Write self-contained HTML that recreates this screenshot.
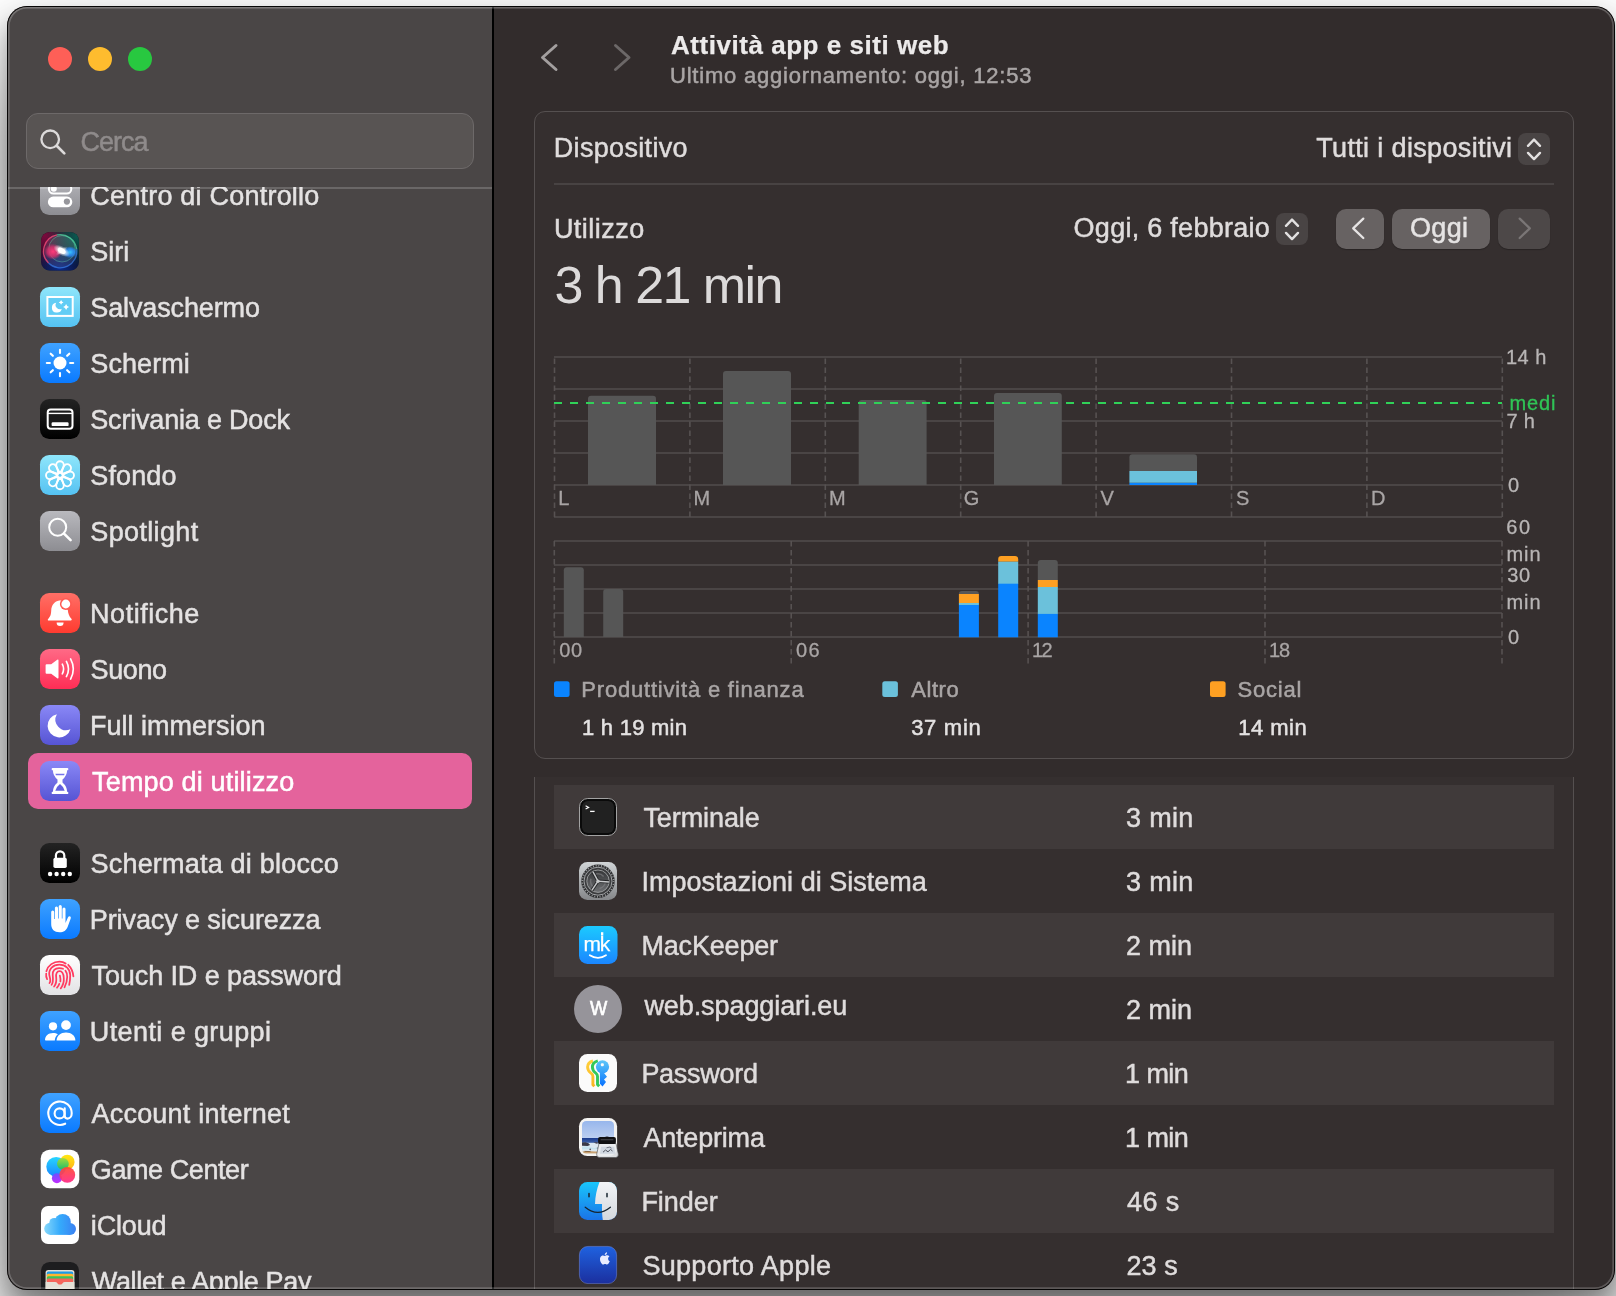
<!DOCTYPE html>
<html lang="it"><head><meta charset="utf-8"><title>Tempo di utilizzo</title>
<style>
*{margin:0;padding:0;box-sizing:border-box}
html,body{width:1616px;height:1296px;overflow:hidden}
body{position:relative;font-family:"Liberation Sans",sans-serif;background:#fff}
#win{position:absolute;left:7px;top:6px;width:1608px;height:1284px;border-radius:20px;overflow:hidden;background:#322c2c;box-shadow:0 14px 24px rgba(0,0,0,.32),0 60px 110px rgba(0,0,0,.45)}
#win>*{position:absolute}
#page{left:-7px;top:-6px;width:1616px;height:1296px;will-change:transform}
#page>*{position:absolute}
#frame{left:0;top:0;width:1608px;height:1284px;border-radius:20px;border:1px solid #070606;pointer-events:none}
#frame:after{content:"";position:absolute;left:0;top:0;right:0;bottom:0;border-radius:19px;box-shadow:inset 0 0 0 1.7px rgba(255,255,255,.2),inset 0 1px 0 0 rgba(255,255,255,.1)}
#sb{left:7px;top:6px;width:485px;height:1284px;background:#4a4646}
#sbclip{left:7px;top:187px;width:485px;height:1102px;overflow:hidden}
#sbclip>div{position:absolute;left:-7px;top:-187px;width:1616px;height:1296px}
#sbclip>div>*{position:absolute}
#sbline{left:7px;top:187px;width:485px;height:2px;background:rgba(255,255,255,.18)}
#div{left:492px;top:6px;width:2px;height:1284px;background:#000}
#search{left:26px;top:113px;width:448px;height:56px;border-radius:12px;background:#585453;border:1px solid #6d6969}
#sel{left:28px;top:753px;width:444px;height:56px;border-radius:10px;background:#e4639c}
.tl{width:24px;height:24px;border-radius:50%;top:47px}
.t{position:absolute;white-space:nowrap}
#p1{left:534px;top:111px;width:1040px;height:648px;border-radius:11px;background:#352f2f;border:1px solid #555050}
#p2{left:534px;top:777px;width:1040px;height:520px;background:#352f2f;border-left:1px solid #555050;border-right:1px solid #555050}
.row{position:absolute;left:554px;width:1000px;height:64px;background:#403a3a}
#sep{left:554px;top:183.3px;width:1000px;height:1.4px;background:#484343}
.step{width:32px;height:32px;border-radius:8px;background:#494444}
.btn{top:209px;height:40px;border-radius:10px;background:#676262;box-shadow:0 1px 1px rgba(0,0,0,.25)}
svg{position:absolute;overflow:visible}
.gl{stroke:#4a4545;stroke-width:2}
.gd{stroke:#575252;stroke-width:1.6;stroke-dasharray:5.6 3.4}
</style></head><body>
<div id="win"><div id="page">
<div id="sb"></div>
<div id="sbclip"><div>
<div id="sel"></div>
<svg width="0" height="0" style="left:0;top:0"><defs><linearGradient id="gGray" x1="0" y1="0" x2="0" y2="1"><stop offset="0" stop-color="#b9b9be"/><stop offset="1" stop-color="#8d8d92"/></linearGradient><linearGradient id="gCyan" x1="0" y1="0" x2="0" y2="1"><stop offset="0" stop-color="#8fe6fb"/><stop offset="1" stop-color="#55c2f2"/></linearGradient><linearGradient id="gBlue" x1="0" y1="0" x2="0" y2="1"><stop offset="0" stop-color="#3fa2ff"/><stop offset="1" stop-color="#0a7aff"/></linearGradient><linearGradient id="gBlk" x1="0" y1="0" x2="0" y2="1"><stop offset="0" stop-color="#232323"/><stop offset="1" stop-color="#000000"/></linearGradient><linearGradient id="gRed" x1="0" y1="0" x2="0" y2="1"><stop offset="0" stop-color="#ff6f66"/><stop offset="1" stop-color="#ff3b30"/></linearGradient><linearGradient id="gPink" x1="0" y1="0" x2="0" y2="1"><stop offset="0" stop-color="#ff6a86"/><stop offset="1" stop-color="#ff2d55"/></linearGradient><linearGradient id="gPurp" x1="0" y1="0" x2="0" y2="1"><stop offset="0" stop-color="#8a88f6"/><stop offset="1" stop-color="#5654d4"/></linearGradient><linearGradient id="gWht" x1="0" y1="0" x2="0" y2="1"><stop offset="0" stop-color="#ffffff"/><stop offset="1" stop-color="#e2e2e4"/></linearGradient><linearGradient id="gSys" x1="0" y1="0" x2="0" y2="1"><stop offset="0" stop-color="#d0d4d6"/><stop offset="1" stop-color="#85878a"/></linearGradient><linearGradient id="gMk" x1="0" y1="0" x2="0" y2="1"><stop offset="0" stop-color="#1ccaff"/><stop offset="1" stop-color="#1a86ff"/></linearGradient><linearGradient id="gFinL" x1="0" y1="0" x2="0" y2="1"><stop offset="0" stop-color="#19c6fb"/><stop offset="1" stop-color="#1a73e8"/></linearGradient><linearGradient id="gFinR" x1="0" y1="0" x2="0" y2="1"><stop offset="0" stop-color="#f3f4f6"/><stop offset="1" stop-color="#d4d8de"/></linearGradient><linearGradient id="gSup" x1="0" y1="0" x2="0" y2="1"><stop offset="0" stop-color="#1f62e0"/><stop offset="1" stop-color="#1b2f9e"/></linearGradient><linearGradient id="gCloud" x1="0" y1="0" x2="0" y2="1"><stop offset="0" stop-color="#5ac8fa"/><stop offset="1" stop-color="#2f8df5"/></linearGradient><linearGradient id="gCloudH" x1="0" y1="0" x2="1" y2="0"><stop offset="0" stop-color="#7fd6fb"/><stop offset=".5" stop-color="#38adfb"/><stop offset="1" stop-color="#3a86f3"/></linearGradient><radialGradient id="gSiriA" cx="0.1" cy="0.1" r="0.9"><stop offset="0" stop-color="#7a0a3c"/><stop offset="1" stop-color="#7a0a3c" stop-opacity="0"/></radialGradient><radialGradient id="gSiriB" cx="0.95" cy="0.1" r="0.8"><stop offset="0" stop-color="#0b5a50"/><stop offset="1" stop-color="#0b5a50" stop-opacity="0"/></radialGradient><radialGradient id="gSiriC" cx="0.5" cy="1" r="0.7"><stop offset="0" stop-color="#0a2a8c"/><stop offset="1" stop-color="#0a2a8c" stop-opacity="0"/></radialGradient><radialGradient id="gSiriP" cx="0.5" cy="0.5" r="0.5"><stop offset="0" stop-color="#ff3b7a"/><stop offset=".6" stop-color="#e0306e" stop-opacity=".8"/><stop offset="1" stop-color="#e0306e" stop-opacity="0"/></radialGradient><radialGradient id="gSiriQ" cx="0.5" cy="0.5" r="0.5"><stop offset="0" stop-color="#39c8ff"/><stop offset=".6" stop-color="#2a8cff" stop-opacity=".8"/><stop offset="1" stop-color="#2a8cff" stop-opacity="0"/></radialGradient><radialGradient id="gSiriW" cx="0.5" cy="0.5" r="0.5"><stop offset="0" stop-color="#fff"/><stop offset=".35" stop-color="#fff" stop-opacity=".9"/><stop offset="1" stop-color="#fff" stop-opacity="0"/></radialGradient><radialGradient id="gSiriG" cx="0.5" cy="0.5" r="0.5"><stop offset="0" stop-color="#3fe0a0" stop-opacity=".0"/><stop offset=".8" stop-color="#3fe0a0" stop-opacity=".25"/><stop offset="1" stop-color="#3fe0a0" stop-opacity="0"/></radialGradient></defs></svg>
<svg style="left:40px;top:175px" width="40" height="40" viewBox="0 0 40 40"><rect width="40" height="40" rx="9.2" fill="url(#gGray)"/><rect x="8.9" y="9.4" width="22.4" height="9.2" rx="4.6" fill="none" stroke="#fff" stroke-width="2"/><circle cx="13.8" cy="13.8" r="3" fill="#fff"/><rect x="7.9" y="21.6" width="24.4" height="10.6" rx="5.3" fill="#fff"/><circle cx="26.9" cy="26.6" r="3.1" fill="#97979c"/></svg>
<svg style="left:40px;top:231px" width="40" height="40" viewBox="0 0 40 40"><g transform="translate(1 1)"><rect width="38" height="38.6" rx="8.8" fill="#0b0c1e"/><rect width="38" height="38.6" rx="8.8" fill="url(#gSiriA)"/><rect width="38" height="38.6" rx="8.8" fill="url(#gSiriB)"/><rect width="38" height="38.6" rx="8.8" fill="url(#gSiriC)"/><circle cx="19.2" cy="19.2" r="16.6" fill="#9aa0c8" fill-opacity=".16"/><circle cx="21" cy="16.5" r="13.5" fill="#3fe0a0" fill-opacity=".10"/><path d="M7.5 31A16.6 16.6 0 0 1 16 2.900" fill="none" stroke="#ff4f7c" stroke-opacity=".75" stroke-width="1.3"/><path d="M16 2.900A16.6 16.6 0 0 1 35.700 17" fill="none" stroke="#4fe0a4" stroke-opacity=".7" stroke-width="1.3"/><path d="M35.700 17A16.6 16.6 0 0 1 7.5 31" fill="none" stroke="#3f8cff" stroke-opacity=".6" stroke-width="1.3"/><circle cx="21" cy="16.800" r="13.2" fill="none" stroke="#7af0c0" stroke-opacity=".35" stroke-width=".9"/><ellipse cx="12" cy="19.6" rx="9" ry="8" fill="url(#gSiriP)"/><ellipse cx="29" cy="20.2" rx="7.5" ry="6" fill="url(#gSiriQ)"/><ellipse cx="20.7" cy="18.8" rx="9" ry="4.6" transform="rotate(30 20.7 18.8)" fill="url(#gSiriW)"/><ellipse cx="20.7" cy="18.8" rx="7" ry="2.2" transform="rotate(-35 20.7 18.8)" fill="url(#gSiriW)" fill-opacity=".6"/><ellipse cx="20.7" cy="18.8" rx="4.2" ry="2.5" transform="rotate(30 20.7 18.8)" fill="#fff"/></g></svg>
<svg style="left:40px;top:287px" width="40" height="40" viewBox="0 0 40 40"><rect width="40" height="40" rx="9.2" fill="url(#gCyan)"/><rect x="7.4" y="10" width="25.3" height="18.900" fill="#62cdf5" stroke="#fff" stroke-width="2"/><path d="M16.24 15.64A5.0 5.0 0 1 0 21.76 21.78A4.3 4.3 0 0 1 16.24 15.64z" fill="#fff"/><path d="M21.1 13.0Q21.628 14.872 23.5 15.4Q21.628 15.928 21.1 17.8Q20.572000000000003 15.928 18.700000000000003 15.4Q20.572000000000003 14.872 21.1 13.0zM26.1 17Q26.76 19.34 29.1 20Q26.76 20.66 26.1 23Q25.44 20.66 23.1 20Q25.44 19.34 26.1 17z" fill="#fff"/></svg>
<svg style="left:40px;top:343px" width="40" height="40" viewBox="0 0 40 40"><rect width="40" height="40" rx="9.2" fill="url(#gBlue)"/><circle cx="20" cy="20" r="6.5" fill="#fff"/><g stroke="#fff" stroke-width="2.1" stroke-linecap="round"><line x1="30.10" y1="20.00" x2="33.20" y2="20.00"/><line x1="27.14" y1="27.14" x2="29.33" y2="29.33"/><line x1="20.00" y1="30.10" x2="20.00" y2="33.20"/><line x1="12.86" y1="27.14" x2="10.67" y2="29.33"/><line x1="9.90" y1="20.00" x2="6.80" y2="20.00"/><line x1="12.86" y1="12.86" x2="10.67" y2="10.67"/><line x1="20.00" y1="9.90" x2="20.00" y2="6.80"/><line x1="27.14" y1="12.86" x2="29.33" y2="10.67"/></g></svg>
<svg style="left:40px;top:399px" width="40" height="40" viewBox="0 0 40 40"><rect width="40" height="40" rx="9.2" fill="url(#gBlk)"/><rect x="7.7" y="10.4" width="24.8" height="19.4" rx="3" fill="#1b1b1b" stroke="#fff" stroke-width="2"/><line x1="8" y1="14.4" x2="32" y2="14.4" stroke="#fff" stroke-width="1.4"/><rect x="11.6" y="23.2" width="17" height="3.9" rx="1.2" fill="#fff"/></svg>
<svg style="left:40px;top:455px" width="40" height="40" viewBox="0 0 40 40"><rect width="40" height="40" rx="9.2" fill="url(#gCyan)"/><g fill="none" stroke="#fff" stroke-width="1.9" stroke-linejoin="round"><path transform="rotate(0 20 20.3)" d="M20 18.2C17.6 14.5 16.2 12.6 16.2 10.1a3.8 3.8 0 0 1 7.6 0C23.8 12.6 22.4 14.5 20 18.2z"/><path transform="rotate(45 20 20.3)" d="M20 18.2C17.6 14.5 16.2 12.6 16.2 10.1a3.8 3.8 0 0 1 7.6 0C23.8 12.6 22.4 14.5 20 18.2z"/><path transform="rotate(90 20 20.3)" d="M20 18.2C17.6 14.5 16.2 12.6 16.2 10.1a3.8 3.8 0 0 1 7.6 0C23.8 12.6 22.4 14.5 20 18.2z"/><path transform="rotate(135 20 20.3)" d="M20 18.2C17.6 14.5 16.2 12.6 16.2 10.1a3.8 3.8 0 0 1 7.6 0C23.8 12.6 22.4 14.5 20 18.2z"/><path transform="rotate(180 20 20.3)" d="M20 18.2C17.6 14.5 16.2 12.6 16.2 10.1a3.8 3.8 0 0 1 7.6 0C23.8 12.6 22.4 14.5 20 18.2z"/><path transform="rotate(225 20 20.3)" d="M20 18.2C17.6 14.5 16.2 12.6 16.2 10.1a3.8 3.8 0 0 1 7.6 0C23.8 12.6 22.4 14.5 20 18.2z"/><path transform="rotate(270 20 20.3)" d="M20 18.2C17.6 14.5 16.2 12.6 16.2 10.1a3.8 3.8 0 0 1 7.6 0C23.8 12.6 22.4 14.5 20 18.2z"/><path transform="rotate(315 20 20.3)" d="M20 18.2C17.6 14.5 16.2 12.6 16.2 10.1a3.8 3.8 0 0 1 7.6 0C23.8 12.6 22.4 14.5 20 18.2z"/></g><circle cx="20" cy="20.3" r="3.6" fill="#fff"/><circle cx="20" cy="20.3" r="1.5" fill="#5cc9f4"/></svg>
<svg style="left:40px;top:511px" width="40" height="40" viewBox="0 0 40 40"><rect width="40" height="40" rx="9.2" fill="url(#gGray)"/><circle cx="17.7" cy="16.3" r="8.5" fill="none" stroke="#fff" stroke-width="2"/><line x1="24" y1="22.6" x2="30.6" y2="29.2" stroke="#fff" stroke-width="2.6" stroke-linecap="round"/></svg>
<svg style="left:40px;top:593px" width="40" height="40" viewBox="0 0 40 40"><rect width="40" height="40" rx="9.2" fill="url(#gRed)"/><path d="M8.7 27.6c-.9 0-1.2-1-.6-1.7c2-2.2 2.9-3.800 3.1-8.200c.2-5.800 3.600-9.400 8.000-10.100c1.400-.2 2.300-.1 3.000.1L21 13l6.800 3.800c.3 4.000 1.400 6.600 3.600 9.000c.6.700.3 1.800-.6 1.800z" fill="#fff"/><path d="M16.6 29.6h7a3.5 3.5 0 0 1-7 0z" fill="#fff"/><circle cx="25.800" cy="11.000" r="5.900" fill="#ff5a52"/><circle cx="25.800" cy="11.000" r="4.400" fill="#fff"/></svg>
<svg style="left:40px;top:649px" width="40" height="40" viewBox="0 0 40 40"><rect width="40" height="40" rx="9.2" fill="url(#gPink)"/><path d="M5.6 16.3q0-1 1-1h4.6l6-4.600q1.300-.9 1.300.7v17.200q0 1.600-1.300.7l-6-4.600H6.600q-1 0-1-1z" fill="#fff"/><g fill="none" stroke="#fff" stroke-width="1.65" stroke-linecap="round"><path d="M22.300 15.200q2.600 4.800 0 9.600"/><path d="M26.400 12.400q4.200 7.600 0 15.200"/><path d="M30.600 9.900q5.400 10.100 0 20.200"/></g></svg>
<svg style="left:40px;top:705px" width="40" height="40" viewBox="0 0 40 40"><rect width="40" height="40" rx="9.2" fill="url(#gPurp)"/><path d="M16.89 9.25A11.7 11.7 0 1 0 30.48 24.15A10.6 10.6 0 0 1 16.89 9.25z" fill="#fff"/></svg>
<svg style="left:40px;top:761px" width="40" height="40" viewBox="0 0 40 40"><rect width="40" height="40" rx="9.2" fill="url(#gPurp)"/><path d="M12.600 6.900h14.800q.9 0 .9.900v.600q0 .9-.9.900h-.300q-.100 5.400-4.600 9.300v2.800q4.500 3.900 4.600 9.300h.300q.9 0 .9.900v.600q0 .9-.9.900H12.600q-.9 0-.9-.9v-.600q0-.9.9-.9h.300q.100-5.400 4.600-9.300v-2.800q-4.500-3.900-4.600-9.300h-.300q-.9 0-.9-.9v-.600q0-.9.900-.9z" fill="#fff"/><path d="M15.400 12.700h9.200l-.500 1.500h-8.200z" fill="#7573ea"/><path d="M15.300 29.800q1.000-4.200 4.700-6.900q3.700 2.700 4.700 6.900z" fill="#615fdd"/></svg>
<svg style="left:40px;top:843px" width="40" height="40" viewBox="0 0 40 40"><rect width="40" height="40" rx="9.2" fill="url(#gBlk)"/><path d="M15.900 15.500v-3.000a4.200 4.200 0 0 1 8.400 0v3.000" fill="none" stroke="#fff" stroke-width="2.200"/><rect x="13.400" y="14.800" width="13.400" height="10.200" rx="1.800" fill="#fff"/><circle cx="10.1" cy="31" r="2.2" fill="#fff"/><circle cx="16.6" cy="31" r="2.2" fill="#fff"/><circle cx="23.2" cy="31" r="2.2" fill="#fff"/><circle cx="29.8" cy="31" r="2.2" fill="#fff"/></svg>
<svg style="left:40px;top:899px" width="40" height="40" viewBox="0 0 40 40"><rect width="40" height="40" rx="9.2" fill="url(#gBlue)"/><path d="M11.200 13.000a1.500 1.500 0 0 1 3.000 0v7.000h.700V9.000a1.550 1.550 0 0 1 3.100 0v10.500h.700V7.600a1.550 1.550 0 0 1 3.100 0v12.000h.700V9.900a1.500 1.500 0 0 1 3.000 0v14.200l2.400-5.600c.9-2.000 3.600-1.200 2.800 1.000l-2.800 7.800c-1.600 4.400-4.200 6.000-8.400 6.000c-5.200 0-8.300-3.000-8.300-8.000z" fill="#fff"/></svg>
<svg style="left:40px;top:955px" width="40" height="40" viewBox="0 0 40 40"><rect width="40" height="40" rx="9.2" fill="url(#gWht)"/><g fill="none" stroke="#ff3b60" stroke-width="1.750" stroke-linecap="round"><path d="M6.400 16.200C8.000 10.200 13.500 6.600 19.500 6.600C22.000 6.600 24.000 7.300 25.700 8.500"/><path d="M28.200 9.800C31.000 12.500 33.000 16.500 33.400 21.400"/><path d="M6.200 18.600Q5.800 21.600 7.100 24.100"/><path d="M9.500 28.000C11.200 26.000 10.000 23.000 9.300 20.000C8.500 14.000 13.000 9.700 19.300 9.700C26.000 9.700 30.000 14.000 30.200 20.000C30.300 24.000 29.800 27.000 29.200 29.900"/><path d="M11.600 29.800C13.600 27.500 13.000 24.000 12.700 20.000C12.300 15.500 15.000 13.000 19.200 13.000C20.800 13.000 22.000 13.300 23.000 13.800"/><path d="M25.400 15.600C27.500 18.000 28.400 25.000 24.500 32.300"/><path d="M14.100 31.500C16.200 29.000 16.600 26.000 16.200 22.500C15.600 18.500 17.000 16.200 19.600 16.200C22.500 16.200 23.500 19.000 23.800 23.000C24.200 28.000 22.500 31.000 20.700 33.400"/><path d="M19.900 20.600Q20.600 23.500 20.400 26.500"/><path d="M19.300 28.800Q18.600 31.000 17.000 32.700"/></g></svg>
<svg style="left:40px;top:1011px" width="40" height="40" viewBox="0 0 40 40"><rect width="40" height="40" rx="9.2" fill="url(#gBlue)"/><g transform="translate(.4 1.5)"><circle cx="12.600" cy="13.800" r="4.100" fill="#fff"/><path d="M4.600 27.600c0-4.400 3.400-7.200 8.000-7.200c1.900 0 3.600.5 4.900 1.300c-1.900 1.500-3.000 3.800-3.100 6.300H5.400q-.8 0-.8-.4z" fill="#fff"/><circle cx="25.600" cy="12.600" r="4.900" fill="#fff"/><path d="M16.200 28.000c0-4.900 4.200-8.000 9.400-8.000s9.400 3.100 9.400 8.000z" fill="#fff"/></g></svg>
<svg style="left:40px;top:1093px" width="40" height="40" viewBox="0 0 40 40"><rect width="40" height="40" rx="9.2" fill="url(#gBlue)"/><g fill="none" stroke="#fff" stroke-width="2.1" stroke-linecap="round"><circle cx="19.600" cy="20.400" r="5.000"/><path d="M24.700 15.300V22.600Q24.700 25.600 27.500 25.600C30.200 25.600 31.700 23.000 31.700 20.200A11.700 11.700 0 1 0 25.200 30.700"/></g></svg>
<svg style="left:40px;top:1149px" width="40" height="40" viewBox="0 0 40 40"><defs><linearGradient id="gcB" x1="0" y1="0" x2="0" y2="1"><stop offset="0" stop-color="#27d6ff"/><stop offset="1" stop-color="#1a86ff"/></linearGradient><linearGradient id="gcY" x1="0" y1="0" x2="0" y2="1"><stop offset="0" stop-color="#ffe812"/><stop offset="1" stop-color="#ffb319"/></linearGradient><linearGradient id="gcG" x1="0" y1="0" x2="0" y2="1"><stop offset="0" stop-color="#a5dc3c"/><stop offset="1" stop-color="#1dbf6b"/></linearGradient><linearGradient id="gcR" x1="0" y1="0" x2="0" y2="1"><stop offset="0" stop-color="#ff4a32"/><stop offset="1" stop-color="#ff2a86"/></linearGradient><linearGradient id="gcP" x1="0" y1="0" x2="0" y2="1"><stop offset="0" stop-color="#6a52ff"/><stop offset="1" stop-color="#c42cff"/></linearGradient></defs><rect x=".7" y=".7" width="38.600" height="38.600" rx="8.800" fill="#fff"/><circle cx="16.200" cy="17.800" r="9.900" fill="url(#gcB)"/><circle cx="27.300" cy="13.000" r="7.300" fill="url(#gcY)"/><circle cx="22.900" cy="14.800" r="5.900" fill="url(#gcG)"/><circle cx="16.900" cy="29.300" r="5.000" fill="url(#gcP)"/><circle cx="27.300" cy="25.900" r="7.900" fill="url(#gcR)" fill-opacity=".93"/></svg>
<svg style="left:40px;top:1205px" width="40" height="40" viewBox="0 0 40 40"><defs><linearGradient id="gCloudU" gradientUnits="userSpaceOnUse" x1="4" y1="0" x2="36" y2="0"><stop offset="0" stop-color="#86d8fb"/><stop offset=".5" stop-color="#35aafb"/><stop offset="1" stop-color="#3a80f2"/></linearGradient></defs><rect x="1" y="1" width="38" height="38" rx="7.000" fill="#fff"/><g fill="url(#gCloudU)"><circle cx="10.300" cy="23.800" r="6.100"/><circle cx="14.200" cy="17.800" r="4.900"/><circle cx="22.700" cy="17.000" r="8.100"/><circle cx="30.000" cy="23.900" r="6.000"/><rect x="10.300" y="20" width="19.700" height="9.900"/></g></svg>
<svg style="left:40px;top:1261px" width="40" height="40" viewBox="0 0 40 40"><g transform="translate(1 1)"><rect width="38" height="38" rx="8.600" fill="#1d1d1f"/><rect x="4.600" y="8.000" width="28.800" height="22" rx="2.600" fill="#e3e0d6"/><rect x="5.800" y="9.400" width="26.400" height="6" rx="1.500" fill="#1a9be8"/><rect x="5.800" y="11.800" width="26.400" height="6" rx="1.500" fill="#ffb52e"/><rect x="5.800" y="14.200" width="26.400" height="6" rx="1.500" fill="#39c45a"/><rect x="5.800" y="16.600" width="26.400" height="6" rx="1.500" fill="#f4655b"/><path d="M4.600 20.000h9.400q1.600 0 2.600 1.400q1.200 2.000 2.400 2.000q1.200 0 2.400-2.000q1.000-1.400 2.600-1.400h9.400v10.000h-28.800z" fill="#e3e0d6"/></g></svg>
<span class="t" style="left:90.30px;top:180.14px;font-size:27px;line-height:32px;letter-spacing:0.217px;color:#e4e2e2;-webkit-text-stroke:0.5px currentColor;">Centro di Controllo</span>
<span class="t" style="left:90.30px;top:236.14px;font-size:27px;line-height:32px;letter-spacing:-0.033px;color:#e4e2e2;-webkit-text-stroke:0.5px currentColor;">Siri</span>
<span class="t" style="left:90.30px;top:292.14px;font-size:27px;line-height:32px;letter-spacing:-0.132px;color:#e4e2e2;-webkit-text-stroke:0.5px currentColor;">Salvaschermo</span>
<span class="t" style="left:90.30px;top:348.14px;font-size:27px;line-height:32px;letter-spacing:0.079px;color:#e4e2e2;-webkit-text-stroke:0.5px currentColor;">Schermi</span>
<span class="t" style="left:90.30px;top:404.14px;font-size:27px;line-height:32px;letter-spacing:-0.192px;color:#e4e2e2;-webkit-text-stroke:0.5px currentColor;">Scrivania e Dock</span>
<span class="t" style="left:90.30px;top:460.14px;font-size:27px;line-height:32px;letter-spacing:0.108px;color:#e4e2e2;-webkit-text-stroke:0.5px currentColor;">Sfondo</span>
<span class="t" style="left:90.30px;top:516.14px;font-size:27px;line-height:32px;letter-spacing:0.354px;color:#e4e2e2;-webkit-text-stroke:0.5px currentColor;">Spotlight</span>
<span class="t" style="left:90.10px;top:598.14px;font-size:27px;line-height:32px;letter-spacing:0.509px;color:#e4e2e2;-webkit-text-stroke:0.5px currentColor;">Notifiche</span>
<span class="t" style="left:90.50px;top:654.14px;font-size:27px;line-height:32px;letter-spacing:-0.364px;color:#e4e2e2;-webkit-text-stroke:0.5px currentColor;">Suono</span>
<span class="t" style="left:90.10px;top:710.14px;font-size:27px;line-height:32px;letter-spacing:-0.016px;color:#e4e2e2;-webkit-text-stroke:0.5px currentColor;">Full immersion</span>
<span class="t" style="left:92.10px;top:766.14px;font-size:27px;line-height:32px;letter-spacing:0.158px;color:#fff;-webkit-text-stroke:0.5px currentColor;">Tempo di utilizzo</span>
<span class="t" style="left:90.50px;top:848.14px;font-size:27px;line-height:32px;letter-spacing:0.205px;color:#e4e2e2;-webkit-text-stroke:0.5px currentColor;">Schermata di blocco</span>
<span class="t" style="left:89.80px;top:904.14px;font-size:27px;line-height:32px;letter-spacing:-0.103px;color:#e4e2e2;-webkit-text-stroke:0.5px currentColor;">Privacy e sicurezza</span>
<span class="t" style="left:91.50px;top:960.14px;font-size:27px;line-height:32px;letter-spacing:-0.100px;color:#e4e2e2;-webkit-text-stroke:0.5px currentColor;">Touch ID e password</span>
<span class="t" style="left:89.80px;top:1016.14px;font-size:27px;line-height:32px;letter-spacing:0.400px;color:#e4e2e2;-webkit-text-stroke:0.5px currentColor;">Utenti e gruppi</span>
<span class="t" style="left:91.50px;top:1098.14px;font-size:27px;line-height:32px;letter-spacing:0.212px;color:#e4e2e2;-webkit-text-stroke:0.5px currentColor;">Account internet</span>
<span class="t" style="left:90.80px;top:1154.14px;font-size:27px;line-height:32px;letter-spacing:-0.417px;color:#e4e2e2;-webkit-text-stroke:0.5px currentColor;">Game Center</span>
<span class="t" style="left:90.80px;top:1210.14px;font-size:27px;line-height:32px;letter-spacing:-0.166px;color:#e4e2e2;-webkit-text-stroke:0.5px currentColor;">iCloud</span>
<span class="t" style="left:91.80px;top:1266.14px;font-size:27px;line-height:32px;letter-spacing:-0.354px;color:#e4e2e2;-webkit-text-stroke:0.5px currentColor;">Wallet e Apple Pay</span>
</div></div>
<div id="sbline"></div>
<div class="tl" style="left:48px;background:#fe5f57"></div>
<div class="tl" style="left:88px;background:#febc2e"></div>
<div class="tl" style="left:128px;background:#28c840"></div>
<div id="search"></div>
<svg style="left:36px;top:125px" width="34" height="34" viewBox="0 0 34 34"><circle cx="14.2" cy="14.3" r="8.8" fill="none" stroke="#dcdada" stroke-width="2.3"/><path d="M20.7 20.8L28.3 28.4" stroke="#dcdada" stroke-width="2.7" stroke-linecap="round"/></svg>
<div id="div"></div>
<svg style="left:536px;top:40px" width="100" height="36" viewBox="0 0 100 36"><path d="M20 5.5L6.5 17.5L20 29.5" fill="none" stroke="#a39f9f" stroke-width="3" stroke-linecap="round" stroke-linejoin="round"/><path d="M79.5 5.5L93 17.5L79.5 29.5" fill="none" stroke="#6c6868" stroke-width="3" stroke-linecap="round" stroke-linejoin="round"/></svg>
<div id="p1"></div>
<div id="sep"></div>
<div class="step" style="left:1518px;top:133px"></div>
<div class="step" style="left:1276px;top:213px"></div>
<svg style="left:1518px;top:133px" width="32" height="32" viewBox="0 0 32 32"><path d="M10 12.8L16 6.6L22 12.8M10 19.9L16 26.1L22 19.9" fill="none" stroke="#e2e0e0" stroke-width="2.4" stroke-linecap="round" stroke-linejoin="round"/></svg>
<svg style="left:1276px;top:213px" width="32" height="32" viewBox="0 0 32 32"><path d="M10 12.8L16 6.6L22 12.8M10 19.9L16 26.1L22 19.9" fill="none" stroke="#e2e0e0" stroke-width="2.4" stroke-linecap="round" stroke-linejoin="round"/></svg>
<div class="btn" style="left:1336px;width:48px"></div>
<div class="btn" style="left:1392px;width:98px"></div>
<div class="btn" style="left:1498px;width:52px;background:#4d4848"></div>
<svg style="left:1336px;top:209px" width="214" height="40" viewBox="0 0 214 40"><path d="M27.3 9.6L17.2 19.3L27.3 29" fill="none" stroke="#e6e4e4" stroke-width="2.3" stroke-linecap="round" stroke-linejoin="round"/><path d="M183.7 9.6L193.8 19.3L183.7 29" fill="none" stroke="#7a7676" stroke-width="2.3" stroke-linecap="round" stroke-linejoin="round"/></svg>
<svg style="left:0;top:0" width="1616" height="780" viewBox="0 0 1616 780">
<line x1="554" y1="357" x2="1502" y2="357" class="gl"/>
<line x1="554" y1="389" x2="1502" y2="389" class="gl"/>
<line x1="554" y1="421" x2="1502" y2="421" class="gl"/>
<line x1="554" y1="453" x2="1502" y2="453" class="gl"/>
<line x1="554" y1="485" x2="1502" y2="485" class="gl"/>
<line x1="554" y1="517" x2="1502" y2="517" class="gl"/>
<line x1="554.5" y1="358.5" x2="554.5" y2="517" class="gd"/>
<line x1="689.9" y1="358.5" x2="689.9" y2="517" class="gd"/>
<line x1="825.3" y1="358.5" x2="825.3" y2="517" class="gd"/>
<line x1="960.7" y1="358.5" x2="960.7" y2="517" class="gd"/>
<line x1="1096.1" y1="358.5" x2="1096.1" y2="517" class="gd"/>
<line x1="1231.5" y1="358.5" x2="1231.5" y2="517" class="gd"/>
<line x1="1366.9" y1="358.5" x2="1366.9" y2="517" class="gd"/>
<line x1="1502.3" y1="358.5" x2="1502.3" y2="517" class="gd"/>
<path d="M588 485V398.8q0-3 3-3H653q3 0 3 3V485z" fill="#565656"/>
<path d="M723 485V374q0-3 3-3H788q3 0 3 3V485z" fill="#565656"/>
<path d="M858.7 485V403q0-3 3-3H923.6q3 0 3 3V485z" fill="#565656"/>
<path d="M994 485V396q0-3 3-3H1058.8q3 0 3 3V485z" fill="#565656"/>
<path d="M1129.4 471V457.2q0-3 3-3H1194q3 0 3 3V471z" fill="#565656"/>
<rect x="1129.4" y="471" width="67.6" height="11.8" fill="#6bc1db"/>
<rect x="1129.4" y="482.9" width="67.6" height="2.1" fill="#0a84ff"/>
<line x1="554" y1="403" x2="1502" y2="403" stroke="#30d158" stroke-width="2.2" stroke-dasharray="8 8"/>
<line x1="554" y1="541.1" x2="1502" y2="541.1" class="gl"/>
<line x1="554" y1="565.1" x2="1502" y2="565.1" class="gl"/>
<line x1="554" y1="589.1" x2="1502" y2="589.1" class="gl"/>
<line x1="554" y1="613" x2="1502" y2="613" class="gl"/>
<line x1="554" y1="637" x2="1502" y2="637" class="gl"/>
<line x1="554.3" y1="541" x2="554.3" y2="664" class="gd"/>
<line x1="791.2" y1="541" x2="791.2" y2="664" class="gd"/>
<line x1="1028.1" y1="541" x2="1028.1" y2="664" class="gd"/>
<line x1="1265" y1="541" x2="1265" y2="664" class="gd"/>
<line x1="1502" y1="541" x2="1502" y2="664" class="gd"/>
<path d="M563.8 637V570.3q0-3 3-3H580.8q3 0 3 3V637z" fill="#565656"/>
<path d="M603.2 637V592q0-3 3-3H620.2q3 0 3 3V637z" fill="#565656"/>
<path d="M958.9 594V594q0-3 3-3H975.9q3 0 3 3V594z" fill="#565656"/><rect x="958.9" y="594" width="20" height="9.3" fill="#fea022"/><rect x="958.9" y="603" width="20" height="2.3" fill="#6bc1db"/><rect x="958.9" y="605" width="20" height="32.3" fill="#0a84ff"/>
<path d="M998.2 561.7V559q0-3 3-3H1015.2q3 0 3 3V561.7z" fill="#fea022"/><rect x="998.2" y="561.7" width="20" height="22.3" fill="#6bc1db"/><rect x="998.2" y="583.7" width="20" height="53.6" fill="#0a84ff"/>
<path d="M1037.8 580V563q0-3 3-3H1054.8q3 0 3 3V580z" fill="#565656"/><rect x="1037.8" y="580" width="20" height="7.3" fill="#fea022"/><rect x="1037.8" y="587" width="20" height="27.2" fill="#6bc1db"/><rect x="1037.8" y="613.9" width="20" height="23.4" fill="#0a84ff"/>
<rect x="554" y="681.3" width="15.6" height="15.6" rx="2.5" fill="#0a84ff"/>
<rect x="882.3" y="681.3" width="15.6" height="15.6" rx="2.5" fill="#6bc1db"/>
<rect x="1210" y="681.3" width="15.6" height="15.6" rx="2.5" fill="#fea022"/>
</svg>
<div id="p2"></div>
<div class="row" style="top:785px"></div><div class="row" style="top:913px"></div><div class="row" style="top:1041px"></div><div class="row" style="top:1169px"></div>
<svg style="left:579px;top:798px" width="38" height="38" viewBox="0 0 38 38"><rect x=".5" y=".5" width="37" height="37" rx="8.300" fill="#0a0a0a" stroke="#a3a3a3" stroke-width="1"/><rect x="3" y="3" width="32" height="32" rx="5.800" fill="#212121"/><path d="M6.600 7.700L9.700 9.400L6.600 11.100" fill="none" stroke="#fff" stroke-width="1.100"/><path d="M11.100 13.400H15.600" stroke="#fff" stroke-width="1.300"/></svg>
<svg style="left:579px;top:862px" width="38" height="38" viewBox="0 0 38 38"><defs><linearGradient id="gSysIn" x1="0" y1="0" x2="0" y2="1"><stop offset="0" stop-color="#343537"/><stop offset="1" stop-color="#6e7073"/></linearGradient></defs><rect width="38" height="38" rx="8.500" fill="url(#gSys)"/><circle cx="19" cy="19.2" r="16.700" fill="#2e2f31"/><circle cx="19" cy="19.2" r="15.600" fill="none" stroke="#a4a6a8" stroke-width="1.700" stroke-dasharray=".9 1.820"/><circle cx="19" cy="19.2" r="14.000" fill="#3a3b3d" stroke="#aeb0b2" stroke-width=".9"/><circle cx="19" cy="19.2" r="11.200" fill="url(#gSysIn)" stroke="#9ea0a2" stroke-width=".9"/><circle cx="19" cy="19.2" r="7.400" fill="none" stroke="#88898c" stroke-opacity=".55" stroke-width="1.500" stroke-dasharray="10 5.500"/><g stroke="#232426" stroke-width="3.300" stroke-linecap="butt"><line x1="19" y1="19.2" x2="13.84" y2="9.49"/><line x1="19" y1="19.2" x2="29.97" y2="19.97"/><line x1="19" y1="19.2" x2="12.85" y2="28.32"/></g><g stroke="#c6c8ca" stroke-width="1.500" stroke-linecap="butt"><line x1="19" y1="19.2" x2="13.84" y2="9.49"/><line x1="19" y1="19.2" x2="29.97" y2="19.97"/><line x1="19" y1="19.2" x2="12.85" y2="28.32"/></g><circle cx="19" cy="19.2" r="1.700" fill="#c6c8ca"/></svg>
<svg style="left:579px;top:926px" width="38" height="38" viewBox="0 0 38 38"><rect width="38.500" height="38" rx="8.500" fill="url(#gMk)"/><text x="4.500" y="24.600" font-family="Liberation Sans, sans-serif" font-size="21" letter-spacing="-1.200" fill="#fff" stroke="#fff" stroke-width=".25">mk</text><rect x="22.000" y="6.200" width="2.300" height="3.400" fill="#fff"/><path d="M10.800 29.300Q19.000 34.600 27.000 29.300" fill="none" stroke="#fff" stroke-width="1.800" stroke-linecap="round"/></svg>
<svg style="left:579px;top:1054px" width="38" height="38" viewBox="0 0 38 38"><defs><linearGradient id="gKeyB" gradientUnits="userSpaceOnUse" x1="0" y1="6" x2="0" y2="32"><stop offset="0" stop-color="#5fc6f8"/><stop offset=".55" stop-color="#2f9bfb"/><stop offset="1" stop-color="#0a72ff"/></linearGradient><linearGradient id="gKeyY" x1="0" y1="0" x2="0" y2="1"><stop offset="0" stop-color="#ffd03c"/><stop offset="1" stop-color="#f9b522"/></linearGradient></defs><rect width="38" height="38" rx="8.500" fill="#fbfbfb"/><g fill="none" stroke-width="2.900" stroke-linejoin="round" transform="translate(.8 .3)"><path d="M13.200 6.700C9.700 7.600 7.800 10.000 7.800 12.800C7.800 15.500 9.200 17.500 11.200 18.800C12.800 19.900 13.100 20.500 13.100 22.000V30.400L14.600 32.000" stroke="url(#gKeyY)"/><path d="M18.000 6.500C14.500 7.500 12.600 10.000 12.600 12.800C12.600 15.500 14.000 17.500 16.000 18.800C17.400 19.800 17.700 20.500 17.700 22.000V30.200L19.400 32.000" stroke="#34c85a"/></g><path d="M20.900 18.000V29.800L23.500 32.400L27.000 28.000L25.000 25.400L28.000 22.800L25.000 19.100V18.000z" fill="url(#gKeyB)"/><circle cx="23.500" cy="12.800" r="6.600" fill="url(#gKeyB)"/><rect x="21.900" y="9.300" width="2.900" height="2.900" rx=".9" fill="#fbfbfb"/></svg>
<svg style="left:579px;top:1118px" width="38" height="38" viewBox="0 0 38 38"><defs><clipPath id="cpPrev"><rect x="3" y="3.100" width="32" height="32.300" rx="4.200"/></clipPath><linearGradient id="gSky" x1="0" y1="0" x2="0" y2="1"><stop offset="0" stop-color="#97b6ec"/><stop offset="1" stop-color="#bccff0"/></linearGradient><linearGradient id="gSea" x1="0" y1="0" x2="0" y2="1"><stop offset="0" stop-color="#1b3a8c"/><stop offset="1" stop-color="#4166ab"/></linearGradient></defs><rect width="38.100" height="38.100" rx="8.300" fill="#f5f4f2"/><g clip-path="url(#cpPrev)"><rect x="3" y="3" width="32" height="17.200" fill="url(#gSky)"/><rect x="3" y="20.000" width="32" height="5.200" fill="url(#gSea)"/><rect x="3" y="24.800" width="32" height="11" fill="#dbe8f1"/><path d="M3 24.600l3.500-.4l3 1.000l1.600 1.800l-2.500 1.000l-5.600-.3z" fill="#3b3a48"/><path d="M14.500 24.600l3.000-.5l2.500.8l-2.500.8z" fill="#45465a"/><path d="M3 29.000q5-1.600 9 .2t8-.6v2.600h-17z" fill="#bfe0ee" fill-opacity=".8"/><circle cx="11.200" cy="31.400" r=".8" fill="#5a5560"/><circle cx="18.300" cy="30.000" r=".5" fill="#5a5560"/><path d="M3 33.600l5.500-.6l8 .5l6 .2v2h-19.500z" fill="#c9a171"/><path d="M5.500 33.400l6 .2" stroke="#7a5a3a" stroke-width=".8"/></g><path d="M20.000 25.500l-2.300 10.600q-.5 3.200 2.700 3.500h16.200q3.200-.3 2.700-3.500l-2.300-10.600z" fill="#e9ecef" fill-opacity=".93" stroke="#45464a" stroke-width=".6"/><path d="M22.000 28.800h13.200l.9 7.000h-15.000z" fill="#c8d2dc" fill-opacity=".75"/><path d="M24.000 34.200l2.500-2.200l2.500 1.800l2.500-2.400l2.000 1.600" stroke="#50545e" stroke-width="1.000" fill="none"/><path d="M27.500 29.800l3.500-.8l1.500 1.200" stroke="#6a6e7a" stroke-width=".9" fill="none"/><path d="M19.100 20.800q0-1.900 1.900-1.900h4.800q2.200-1.000 4.400 0h4.800q1.900 0 1.900 1.900v3.400q0 1.900-1.900 1.900h-14.000q-1.900 0-1.900-1.900z" fill="#101012"/><rect x="21.500" y="21.300" width="13" height="1.000" rx=".5" fill="#4a4a50"/></svg>
<svg style="left:579px;top:1182px" width="38" height="38" viewBox="0 0 38 38"><defs><clipPath id="cpFin"><rect width="38" height="38" rx="8.500"/></clipPath></defs><g clip-path="url(#cpFin)"><rect width="38" height="38" fill="url(#gFinL)"/><path d="M20.500 0C17.800 7 16.200 14 16.000 22.000h7.000c-.2 5.500.1 11 .8 16H38V0z" fill="url(#gFinR)"/></g><g fill="none" stroke="#17242f" stroke-linecap="round"><path d="M10.000 11.400v3.300M28.000 11.400v3.300" stroke-width="1.500"/><path d="M6.200 25.200Q18.800 35.400 31.400 25.200" stroke-width="1.250"/><path d="M20.500 .3C17.800 7 16.200 14 16.000 22.000h7.000c-.2 5.500.1 11 .8 15.700" stroke-width=".0"/></g></svg>
<svg style="left:579px;top:1246px" width="38" height="38" viewBox="0 0 38 38"><rect x=".4" y=".4" width="37.200" height="37.200" rx="8.500" fill="url(#gSup)" stroke="#7f95f0" stroke-opacity=".55" stroke-width=".8"/><g transform="translate(19.300 5.600) scale(.56)" fill="#e8ecff"><path d="M15.800 6.700c-1.700-.1-3.200 1-4.000 1s-2.100-.9-3.500-.9c-1.800 0-3.500 1.100-4.400 2.700c-1.900 3.300-.5 8.100 1.300 10.800c.9 1.300 2.000 2.800 3.400 2.700c1.400-.1 1.900-.9 3.500-.9s2.100.9 3.500.9c1.500 0 2.400-1.300 3.300-2.600c1.000-1.500 1.500-3.000 1.500-3.100c0 0-2.900-1.100-2.900-4.400c0-2.700 2.200-4.000 2.300-4.100c-1.300-1.900-3.200-2.100-4.000-2.100z"/><path d="M14.600 4.600c.7-.9 1.200-2.100 1.100-3.400c-1.100.1-2.400.7-3.100 1.600c-.7.800-1.300 2.100-1.100 3.300c1.200.1 2.400-.6 3.100-1.500z"/></g></svg>
<div style="position:absolute;left:574px;top:985px;width:48px;height:48px;border-radius:50%;background:#96949a"></div>
<span class="t" style="left:80.40px;top:125.74px;font-size:27px;line-height:32px;letter-spacing:-0.976px;color:#8f8b8b;-webkit-text-stroke:0.5px currentColor;">Cerca</span>
<span class="t" style="left:671.00px;top:30.29px;font-size:26px;line-height:31px;letter-spacing:0.534px;color:#eceaea;font-weight:700;-webkit-text-stroke:0.25px currentColor;">Attività app e siti web</span>
<span class="t" style="left:670.00px;top:63.08px;font-size:22px;line-height:26px;letter-spacing:0.785px;color:#a9a5a5;-webkit-text-stroke:0.5px currentColor;">Ultimo aggiornamento: oggi, 12:53</span>
<span class="t" style="left:553.80px;top:132.24px;font-size:27px;line-height:32px;letter-spacing:0.327px;color:#dfdcdc;-webkit-text-stroke:0.5px currentColor;">Dispositivo</span>
<span class="t" style="left:1316.20px;top:132.14px;font-size:27px;line-height:32px;letter-spacing:0.352px;color:#dfdcdc;-webkit-text-stroke:0.5px currentColor;">Tutti i dispositivi</span>
<span class="t" style="left:553.90px;top:212.54px;font-size:27px;line-height:32px;letter-spacing:0.472px;color:#dfdcdc;-webkit-text-stroke:0.5px currentColor;">Utilizzo</span>
<span class="t" style="left:1073.60px;top:211.74px;font-size:27px;line-height:32px;letter-spacing:0.273px;color:#dfdcdc;-webkit-text-stroke:0.5px currentColor;">Oggi, 6 febbraio</span>
<span class="t" style="left:1410.00px;top:212.04px;font-size:27px;line-height:32px;letter-spacing:0.322px;color:#e6e4e4;-webkit-text-stroke:0.5px currentColor;">Oggi</span>
<span class="t" style="left:554.60px;top:254.08px;font-size:52px;line-height:62px;letter-spacing:-1.543px;color:#dcdada;">3 h 21 min</span>
<span class="t" style="left:1505.90px;top:345.07px;font-size:20px;line-height:24px;letter-spacing:0.532px;color:#b8b5b5;-webkit-text-stroke:0.3px currentColor;">14 h</span>
<span class="t" style="left:1509.50px;top:390.67px;font-size:20px;line-height:24px;letter-spacing:0.865px;color:#30c456;-webkit-text-stroke:0.3px currentColor;">medi</span>
<span class="t" style="left:1506.50px;top:408.87px;font-size:20px;line-height:24px;letter-spacing:0.260px;color:#b8b5b5;-webkit-text-stroke:0.3px currentColor;">7 h</span>
<span class="t" style="left:1507.90px;top:472.57px;font-size:20px;line-height:24px;letter-spacing:0.000px;color:#b8b5b5;-webkit-text-stroke:0.3px currentColor;">0</span>
<span class="t" style="left:558.20px;top:486.07px;font-size:20px;line-height:24px;letter-spacing:0.000px;color:#a9a5a5;-webkit-text-stroke:0.3px currentColor;">L</span>
<span class="t" style="left:693.40px;top:486.07px;font-size:20px;line-height:24px;letter-spacing:0.000px;color:#a9a5a5;-webkit-text-stroke:0.3px currentColor;">M</span>
<span class="t" style="left:829.00px;top:486.07px;font-size:20px;line-height:24px;letter-spacing:0.000px;color:#a9a5a5;-webkit-text-stroke:0.3px currentColor;">M</span>
<span class="t" style="left:963.80px;top:486.07px;font-size:20px;line-height:24px;letter-spacing:0.000px;color:#a9a5a5;-webkit-text-stroke:0.3px currentColor;">G</span>
<span class="t" style="left:1100.60px;top:486.07px;font-size:20px;line-height:24px;letter-spacing:0.000px;color:#a9a5a5;-webkit-text-stroke:0.3px currentColor;">V</span>
<span class="t" style="left:1235.90px;top:486.07px;font-size:20px;line-height:24px;letter-spacing:0.000px;color:#a9a5a5;-webkit-text-stroke:0.3px currentColor;">S</span>
<span class="t" style="left:1370.90px;top:486.07px;font-size:20px;line-height:24px;letter-spacing:0.000px;color:#a9a5a5;-webkit-text-stroke:0.3px currentColor;">D</span>
<span class="t" style="left:559.20px;top:637.67px;font-size:20px;line-height:24px;letter-spacing:0.677px;color:#a9a5a5;-webkit-text-stroke:0.3px currentColor;">00</span>
<span class="t" style="left:796.00px;top:637.67px;font-size:20px;line-height:24px;letter-spacing:1.377px;color:#a9a5a5;-webkit-text-stroke:0.3px currentColor;">06</span>
<span class="t" style="left:1032.10px;top:637.67px;font-size:20px;line-height:24px;letter-spacing:-1.823px;color:#a9a5a5;-webkit-text-stroke:0.3px currentColor;">12</span>
<span class="t" style="left:1269.00px;top:637.67px;font-size:20px;line-height:24px;letter-spacing:-1.123px;color:#a9a5a5;-webkit-text-stroke:0.3px currentColor;">18</span>
<span class="t" style="left:1506.20px;top:515.27px;font-size:20px;line-height:24px;letter-spacing:1.677px;color:#b8b5b5;-webkit-text-stroke:0.3px currentColor;">60</span>
<span class="t" style="left:1506.50px;top:541.77px;font-size:20px;line-height:24px;letter-spacing:0.898px;color:#b8b5b5;-webkit-text-stroke:0.3px currentColor;">min</span>
<span class="t" style="left:1507.20px;top:563.37px;font-size:20px;line-height:24px;letter-spacing:0.677px;color:#b8b5b5;-webkit-text-stroke:0.3px currentColor;">30</span>
<span class="t" style="left:1506.50px;top:589.57px;font-size:20px;line-height:24px;letter-spacing:0.898px;color:#b8b5b5;-webkit-text-stroke:0.3px currentColor;">min</span>
<span class="t" style="left:1508.00px;top:624.77px;font-size:20px;line-height:24px;letter-spacing:0.000px;color:#b8b5b5;-webkit-text-stroke:0.3px currentColor;">0</span>
<span class="t" style="left:581.30px;top:677.28px;font-size:22px;line-height:26px;letter-spacing:0.804px;color:#a9a5a5;-webkit-text-stroke:0.5px currentColor;">Produttività e finanza</span>
<span class="t" style="left:582.00px;top:714.98px;font-size:22px;line-height:26px;letter-spacing:0.245px;color:#e4e2e2;-webkit-text-stroke:0.5px currentColor;">1 h 19 min</span>
<span class="t" style="left:911.20px;top:677.28px;font-size:22px;line-height:26px;letter-spacing:0.575px;color:#a9a5a5;-webkit-text-stroke:0.5px currentColor;">Altro</span>
<span class="t" style="left:911.20px;top:714.98px;font-size:22px;line-height:26px;letter-spacing:0.701px;color:#e4e2e2;-webkit-text-stroke:0.5px currentColor;">37 min</span>
<span class="t" style="left:1237.50px;top:677.28px;font-size:22px;line-height:26px;letter-spacing:0.814px;color:#a9a5a5;-webkit-text-stroke:0.5px currentColor;">Social</span>
<span class="t" style="left:1238.20px;top:714.98px;font-size:22px;line-height:26px;letter-spacing:0.501px;color:#e4e2e2;-webkit-text-stroke:0.5px currentColor;">14 min</span>
<span class="t" style="left:643.40px;top:802.14px;font-size:27px;line-height:32px;letter-spacing:-0.078px;color:#dfdcdc;-webkit-text-stroke:0.5px currentColor;">Terminale</span>
<span class="t" style="left:1126.00px;top:802.24px;font-size:27px;line-height:32px;letter-spacing:0.323px;color:#dfdcdc;-webkit-text-stroke:0.5px currentColor;">3 min</span>
<span class="t" style="left:641.40px;top:866.14px;font-size:27px;line-height:32px;letter-spacing:0.013px;color:#dfdcdc;-webkit-text-stroke:0.5px currentColor;">Impostazioni di Sistema</span>
<span class="t" style="left:1126.00px;top:866.24px;font-size:27px;line-height:32px;letter-spacing:0.323px;color:#dfdcdc;-webkit-text-stroke:0.5px currentColor;">3 min</span>
<span class="t" style="left:641.40px;top:930.14px;font-size:27px;line-height:32px;letter-spacing:-0.173px;color:#dfdcdc;-webkit-text-stroke:0.5px currentColor;">MacKeeper</span>
<span class="t" style="left:1126.00px;top:930.24px;font-size:27px;line-height:32px;letter-spacing:-0.002px;color:#dfdcdc;-webkit-text-stroke:0.5px currentColor;">2 min</span>
<span class="t" style="left:644.40px;top:989.84px;font-size:27px;line-height:32px;letter-spacing:-0.081px;color:#dfdcdc;-webkit-text-stroke:0.5px currentColor;">web.spaggiari.eu</span>
<span class="t" style="left:1126.00px;top:994.24px;font-size:27px;line-height:32px;letter-spacing:-0.002px;color:#dfdcdc;-webkit-text-stroke:0.5px currentColor;">2 min</span>
<span class="t" style="left:641.40px;top:1058.14px;font-size:27px;line-height:32px;letter-spacing:-0.276px;color:#dfdcdc;-webkit-text-stroke:0.5px currentColor;">Password</span>
<span class="t" style="left:1125.00px;top:1058.24px;font-size:27px;line-height:32px;letter-spacing:-0.552px;color:#dfdcdc;-webkit-text-stroke:0.5px currentColor;">1 min</span>
<span class="t" style="left:643.40px;top:1122.14px;font-size:27px;line-height:32px;letter-spacing:-0.192px;color:#dfdcdc;-webkit-text-stroke:0.5px currentColor;">Anteprima</span>
<span class="t" style="left:1125.00px;top:1122.24px;font-size:27px;line-height:32px;letter-spacing:-0.552px;color:#dfdcdc;-webkit-text-stroke:0.5px currentColor;">1 min</span>
<span class="t" style="left:641.40px;top:1186.14px;font-size:27px;line-height:32px;letter-spacing:-0.028px;color:#dfdcdc;-webkit-text-stroke:0.5px currentColor;">Finder</span>
<span class="t" style="left:1127.00px;top:1186.24px;font-size:27px;line-height:32px;letter-spacing:0.422px;color:#dfdcdc;-webkit-text-stroke:0.5px currentColor;">46 s</span>
<span class="t" style="left:642.40px;top:1250.14px;font-size:27px;line-height:32px;letter-spacing:0.306px;color:#dfdcdc;-webkit-text-stroke:0.5px currentColor;">Supporto Apple</span>
<span class="t" style="left:1126.50px;top:1250.24px;font-size:27px;line-height:32px;letter-spacing:0.055px;color:#dfdcdc;-webkit-text-stroke:0.5px currentColor;">23 s</span>
<span class="t" style="left:589.60px;top:995.42px;font-size:21px;line-height:25px;letter-spacing:0.000px;color:#fff;-webkit-text-stroke:0.4px currentColor;transform:scaleX(.87);transform-origin:0 0;-webkit-text-stroke:.7px #fff;">W</span>
</div><div id="frame"></div></div>
</body></html>
